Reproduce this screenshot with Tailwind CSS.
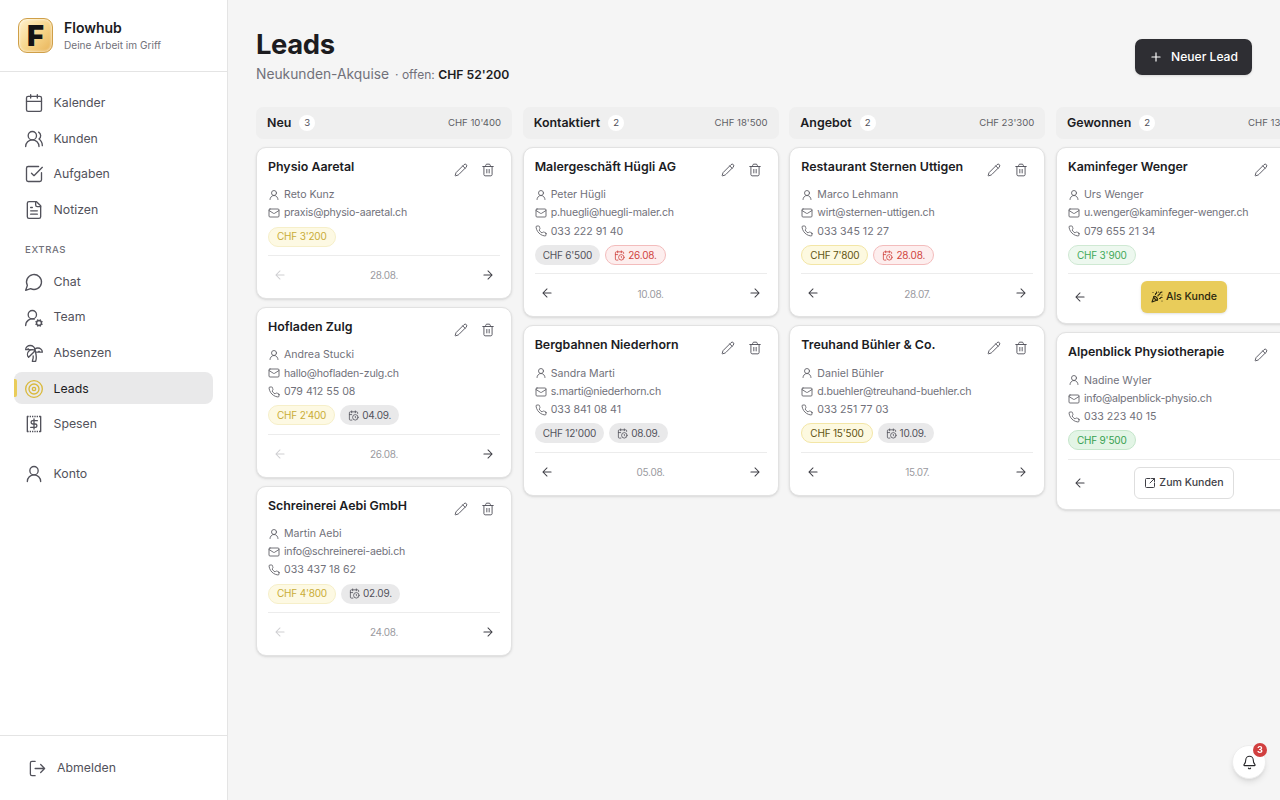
<!doctype html>
<html lang="de"><head><meta charset="utf-8"><title>Leads</title>
<script src="https://cdn.jsdelivr.net/npm/@tailwindcss/browser@4"></script></head>
<body class="m-0 h-[800px] w-[1280px] overflow-hidden bg-[#f5f5f5] font-[Inter,sans-serif] text-[#1c1c1f]">
<svg class="hidden" aria-hidden="true">
<symbol id="calendar" viewBox="0 0 24 24" fill="none" stroke="currentColor" stroke-linecap="round" stroke-linejoin="round"><path d="M8 2v4M16 2v4"/><rect x="3" y="4" width="18" height="18" rx="2"/><path d="M3 10h18"/></symbol>
<symbol id="users" viewBox="0 0 24 24" fill="none" stroke="currentColor" stroke-linecap="round" stroke-linejoin="round"><path d="M18 21a8 8 0 0 0-16 0"/><circle cx="10" cy="8" r="5"/><path d="M22 20c0-3.37-2-6.5-4-8a5 5 0 0 0-.45-8.3"/></symbol>
<symbol id="check" viewBox="0 0 24 24" fill="none" stroke="currentColor" stroke-linecap="round" stroke-linejoin="round"><path d="M21 10.5V19a2 2 0 0 1-2 2H5a2 2 0 0 1-2-2V5a2 2 0 0 1 2-2h12.5"/><path d="m9 11 3 3L22 4"/></symbol>
<symbol id="file" viewBox="0 0 24 24" fill="none" stroke="currentColor" stroke-linecap="round" stroke-linejoin="round"><path d="M15 2H6a2 2 0 0 0-2 2v16a2 2 0 0 0 2 2h12a2 2 0 0 0 2-2V7Z"/><path d="M14 2v4a2 2 0 0 0 2 2h4M10 9H8M16 13H8M16 17H8"/></symbol>
<symbol id="chat" viewBox="0 0 24 24" fill="none" stroke="currentColor" stroke-linecap="round" stroke-linejoin="round"><path d="M7.9 20A9 9 0 1 0 4 16.1L2 22Z"/></symbol>
<symbol id="usercog" viewBox="0 0 24 24" fill="none" stroke="currentColor" stroke-linecap="round" stroke-linejoin="round"><path d="M2 21a8 8 0 0 1 10.434-7.62"/><circle cx="10" cy="8" r="5"/><circle cx="18" cy="18" r="3"/><path d="m14.305 19.53.923-.382M15.228 16.852l-.923-.383M16.852 15.228l-.383-.923M16.852 20.772l-.383.924M19.148 15.228l.383-.923M19.53 21.696l-.382-.924M20.772 16.852l.924-.383M20.772 19.148l.924.383"/></symbol>
<symbol id="palm" viewBox="0 0 24 24" fill="none" stroke="currentColor" stroke-linecap="round" stroke-linejoin="round"><path d="M13 8c0-2.76-2.46-5-5.5-5S2 5.24 2 8h2l1-1 1 1h4"/><path d="M13 7.14A5.82 5.82 0 0 1 16.5 6c3.04 0 5.5 2.24 5.5 5h-3l-1-1-1 1h-3"/><path d="M5.89 9.71c-2.15 2.15-2.3 5.47-.35 7.43l4.24-4.25.7-.7.71-.71 2.12-2.12c-1.95-1.96-5.27-1.8-7.42.35"/><path d="M11 15.5c.5 2.5-.17 4.5-1 6.5h4c2-5.5-.5-12-1-14"/></symbol>
<symbol id="target" viewBox="0 0 24 24" fill="none" stroke="currentColor" stroke-linecap="round" stroke-linejoin="round"><circle cx="12" cy="12" r="10"/><circle cx="12" cy="12" r="6"/><circle cx="12" cy="12" r="2"/></symbol>
<symbol id="spesen" viewBox="0 0 24 24" fill="none" stroke="currentColor" stroke-linecap="round" stroke-linejoin="round"><path d="M4 3v18M20 3v18"/><path d="M4 3h16M4 21h16" stroke-dasharray="1.6 1.2" stroke-linecap="butt"/><path d="M16 8H10.5a2 2 0 0 0 0 4h3a2 2 0 0 1 0 4H8M12 6v12"/></symbol>
<symbol id="user" viewBox="0 0 24 24" fill="none" stroke="currentColor" stroke-linecap="round" stroke-linejoin="round"><circle cx="12" cy="8" r="5"/><path d="M20 21a8 8 0 0 0-16 0"/></symbol>
<symbol id="logout" viewBox="0 0 24 24" fill="none" stroke="currentColor" stroke-linecap="round" stroke-linejoin="round"><path d="M9 21H5a2 2 0 0 1-2-2V5a2 2 0 0 1 2-2h4"/><path d="m16 17 5-5-5-5M21 12H9"/></symbol>
<symbol id="pencil" viewBox="0 0 24 24" fill="none" stroke="currentColor" stroke-linecap="round" stroke-linejoin="round"><path d="M21.174 6.812a1 1 0 0 0-3.986-3.987L3.842 16.174a2 2 0 0 0-.5.83l-1.321 4.352a.5.5 0 0 0 .623.622l4.353-1.32a2 2 0 0 0 .83-.497z"/><path d="m15 5 4 4"/></symbol>
<symbol id="trash" viewBox="0 0 24 24" fill="none" stroke="currentColor" stroke-linecap="round" stroke-linejoin="round"><path d="M3 6h18M19 6v14c0 1-1 2-2 2H7c-1 0-2-1-2-2V6M8 6V4c0-1 1-2 2-2h4c1 0 2 1 2 2v2M10 11v6M14 11v6"/></symbol>
<symbol id="mail" viewBox="0 0 24 24" fill="none" stroke="currentColor" stroke-linecap="round" stroke-linejoin="round"><rect x="2" y="4" width="20" height="16" rx="2"/><path d="m22 7-8.97 5.7a1.94 1.94 0 0 1-2.06 0L2 7"/></symbol>
<symbol id="phone" viewBox="0 0 24 24" fill="none" stroke="currentColor" stroke-linecap="round" stroke-linejoin="round"><path d="M22 16.92v3a2 2 0 0 1-2.18 2 19.79 19.79 0 0 1-8.63-3.07 19.5 19.5 0 0 1-6-6 19.79 19.79 0 0 1-3.07-8.67A2 2 0 0 1 4.11 2h3a2 2 0 0 1 2 1.72 12.84 12.84 0 0 0 .7 2.81 2 2 0 0 1-.45 2.11L8.09 9.91a16 16 0 0 0 6 6l1.27-1.27a2 2 0 0 1 2.11-.45 12.84 12.84 0 0 0 2.81.7A2 2 0 0 1 22 16.92z"/></symbol>
<symbol id="left" viewBox="0 0 24 24" fill="none" stroke="currentColor" stroke-linecap="round" stroke-linejoin="round"><path d="M19 12H5M12 19l-7-7 7-7"/></symbol>
<symbol id="right" viewBox="0 0 24 24" fill="none" stroke="currentColor" stroke-linecap="round" stroke-linejoin="round"><path d="M5 12h14M12 5l7 7-7 7"/></symbol>
<symbol id="calclock" viewBox="0 0 24 24" fill="none" stroke="currentColor" stroke-linecap="round" stroke-linejoin="round"><path d="M21 7.5V6a2 2 0 0 0-2-2H5a2 2 0 0 0-2 2v14a2 2 0 0 0 2 2h3.5M16 2v4M8 2v4M3 10h5M17.5 17.5 16 16.3V14"/><circle cx="16" cy="16" r="6"/></symbol>
<symbol id="party" viewBox="0 0 24 24" fill="none" stroke="currentColor" stroke-linecap="round" stroke-linejoin="round"><path d="M5.8 11.3 2 22l10.7-3.79M4 3h.01M22 8h.01M15 2h.01M22 20h.01M22 2l-2.24.75a2.9 2.9 0 0 0-1.96 3.12c.1.86-.57 1.63-1.45 1.63h-.38c-.86 0-1.6.6-1.76 1.44L14 10M22 13l-.82-.33c-.86-.34-1.82.2-1.98 1.11-.11.7-.72 1.22-1.43 1.22H17M11 2l.33.82c.34.86-.2 1.82-1.11 1.98C9.52 4.9 9 5.52 9 6.23V7"/><path d="M11 13c1.93 1.93 2.83 4.17 2 5-.83.83-3.07-.07-5-2-1.93-1.93-2.83-4.17-2-5 .83-.83 3.07.07 5 2Z"/></symbol>
<symbol id="external" viewBox="0 0 24 24" fill="none" stroke="currentColor" stroke-linecap="round" stroke-linejoin="round"><path d="M12 3H5a2 2 0 0 0-2 2v14a2 2 0 0 0 2 2h14a2 2 0 0 0 2-2v-7M21 3l-9 9M15 3h6v6"/></symbol>
<symbol id="bell" viewBox="0 0 24 24" fill="none" stroke="currentColor" stroke-linecap="round" stroke-linejoin="round"><path d="M10.268 21a2 2 0 0 0 3.464 0"/><path d="M3.262 15.326A1 1 0 0 0 4 17h16a1 1 0 0 0 .74-1.673C19.41 13.956 18 12.499 18 8A6 6 0 0 0 6 8c0 4.499-1.411 5.956-2.738 7.326"/></symbol>
<symbol id="plus" viewBox="0 0 24 24" fill="none" stroke="currentColor" stroke-linecap="round" stroke-linejoin="round"><path d="M5 12h14M12 5v14"/></symbol>
</svg>

<div class="flex h-[800px] w-[1280px]">
<aside class="flex h-full w-[228px] shrink-0 flex-col border-r border-[#e4e4e4] bg-white">
  <div class="flex h-[72px] shrink-0 items-center gap-[11px] border-b border-[#e4e4e4] pl-[18px]">
    <div class="flex size-[35px] items-center justify-center rounded-[9px] border-[1.5px] border-[#cf9f48] bg-[linear-gradient(135deg,#fff1cb_0%,#f6d488_55%,#e8b257_100%)] text-[29px] leading-none font-black text-[#141414] shadow-[inset_0_0_3px_#fff]">F</div>
    <div class="flex flex-col gap-[2px]">
      <span class="text-[14px] leading-[18px] font-semibold text-[#1c1c1f]">Flowhub</span>
      <span class="text-[10.1px] leading-[13px] text-[#71717a]">Deine Arbeit im Griff</span>
    </div>
  </div>
  <nav class="flex flex-col px-[14px] pt-[14.8px] text-[12.3px] text-[#52525b]">
    <div class="flex flex-col gap-[3.55px]">
      <a class="flex h-[32px] items-center gap-[10px] pt-[1px] pl-[9.5px]"><svg class="size-[20px] stroke-[1.6]"><use href="#calendar"/></svg>Kalender</a>
      <a class="flex h-[32px] items-center gap-[10px] pt-[1px] pl-[9.5px]"><svg class="size-[20px] stroke-[1.6]"><use href="#users"/></svg>Kunden</a>
      <a class="flex h-[32px] items-center gap-[10px] pt-[1px] pl-[9.5px]"><svg class="size-[20px] stroke-[1.6]"><use href="#check"/></svg>Aufgaben</a>
      <a class="flex h-[32px] items-center gap-[10px] pt-[1px] pl-[9.5px]"><svg class="size-[20px] stroke-[1.6]"><use href="#file"/></svg>Notizen</a>
    </div>
    <div class="mt-[18px] mb-[8.2px] h-[14px] pl-[11px] text-[9.6px] leading-[14px] font-medium tracking-[0.6px] text-[#71717a]">EXTRAS</div>
    <div class="flex flex-col gap-[3.55px]">
      <a class="flex h-[32px] items-center gap-[10px] pt-[1px] pl-[9.5px]"><svg class="size-[20px] stroke-[1.6]"><use href="#chat"/></svg>Chat</a>
      <a class="flex h-[32px] items-center gap-[10px] pt-[1px] pl-[9.5px]"><svg class="size-[20px] stroke-[1.6]"><use href="#usercog"/></svg>Team</a>
      <a class="flex h-[32px] items-center gap-[10px] pt-[1px] pl-[9.5px]"><svg class="size-[20px] stroke-[1.6]"><use href="#palm"/></svg>Absenzen</a>
      <a class="relative flex h-[32px] items-center gap-[10px] rounded-[8px] bg-[#e9e9ea] pt-[1px] pl-[9.5px] text-[#1c1c1f]"><span class="absolute top-[7px] left-0 h-[18px] w-[3px] rounded-r-[2px] bg-[#e9cc5a]"></span><svg class="size-[20px] stroke-[1.6] text-[#d9b93c]"><use href="#target"/></svg>Leads</a>
      <a class="flex h-[32px] items-center gap-[10px] pt-[1px] pl-[9.5px]"><svg class="size-[20px] stroke-[1.6]"><use href="#spesen"/></svg>Spesen</a>
    </div>
    <a class="mt-[18px] flex h-[32px] items-center gap-[10px] pt-[1px] pl-[9.5px]"><svg class="size-[20px] stroke-[1.6]"><use href="#user"/></svg>Konto</a>
  </nav>
  <div class="mt-auto flex h-[65px] items-center gap-[10px] border-t border-[#e4e4e4] pt-[1px] pl-[28px] text-[12.3px] text-[#52525b]"><svg class="size-[19px] stroke-[1.6]"><use href="#logout"/></svg>Abmelden</div>
</aside>

<main class="min-w-0 flex-1 overflow-hidden pt-[26px] pl-[28px]">
  <header class="flex h-[81px] items-start justify-between pr-[28px]">
    <div>
      <h1 class="text-[27.4px] leading-[36px] font-bold tracking-[-0.4px] text-[#1c1c1f]">Leads</h1>
      <p class="mt-[2px] flex items-baseline text-[13.8px] leading-[20px] text-[#71717a]">Neukunden-Akquise<span class="ml-[6px] text-[12px]">· offen:</span><span class="ml-[3.5px] text-[12.2px] font-semibold text-[#1c1c1f]">CHF 52'200</span></p>
    </div>
    <button class="mt-[13px] flex h-[36px] w-[117px] items-center justify-center gap-[8px] rounded-[7px] bg-[#2e2e33] text-[12.1px] font-medium text-white shadow-sm"><svg class="size-[14px] stroke-2"><use href="#plus"/></svg>Neuer Lead</button>
  </header>

  <div class="flex gap-[10.67px]">

    <section class="flex w-[256px] shrink-0 flex-col gap-[8px]">
      <div class="flex h-[32px] items-center justify-between rounded-[7px] bg-[#efefef] px-[11px]"><div class="flex items-center gap-[8px]"><span class="text-[12.4px] font-semibold">Neu</span><span class="flex size-[16px] items-center justify-center rounded-full bg-white text-[9.6px] text-[#52525b]">3</span></div><span class="text-[9.6px] text-[#5f5f66]">CHF 10'400</span></div>

      <article class="flex flex-col rounded-[10px] border border-[#e2e2e2] bg-white px-[11px] pt-[11px] pb-[11px] shadow-sm">
        <div class="flex h-[27px] items-start justify-between"><h3 class="text-[12.4px] leading-[15px] font-semibold">Physio Aaretal</h3><div class="flex gap-[3px] text-[#52525b]"><span class="flex h-[22px] w-[24px] items-center justify-center"><svg class="size-[14px] stroke-[1.6]"><use href="#pencil"/></svg></span><span class="flex h-[22px] w-[24px] items-center justify-center"><svg class="size-[14px] stroke-[1.6]"><use href="#trash"/></svg></span></div></div>
        <div class="flex h-[18.2px] items-center gap-[4px] text-[10.6px] text-[#71717a]"><svg class="size-[12px] stroke-[1.75] text-[#5f5f66]"><use href="#user"/></svg>Reto Kunz</div>
        <div class="flex h-[18.2px] items-center gap-[4px] text-[10.6px] tracking-[-0.2px] text-[#71717a]"><svg class="size-[12px] stroke-[1.75] text-[#5f5f66]"><use href="#mail"/></svg>praxis@physio-aaretal.ch</div>
        <div class="mt-[4.5px] flex gap-[5px]"><span class="flex h-[20px] items-center rounded-full border border-[#f6efc9] bg-[#fdf9e3] px-[8px] text-[10px] tracking-[-0.2px] text-[#c9ac36]">CHF 3'200</span></div>
        <div class="mt-[8.3px] flex items-center justify-between border-t border-[#ececec] pt-[7px]"><span class="flex h-[24px] w-[24px] items-center justify-center text-[#cfcfd2]"><svg class="size-[14px] stroke-[1.75]"><use href="#left"/></svg></span><span class="pt-[1.5px] text-[10px] tracking-[-0.3px] text-[#9a9aa0]">28.08.</span><span class="flex h-[24px] w-[24px] items-center justify-center text-[#3f3f46]"><svg class="size-[14px] stroke-[1.75]"><use href="#right"/></svg></span></div>
      </article>

      <article class="flex flex-col rounded-[10px] border border-[#e2e2e2] bg-white px-[11px] pt-[11px] pb-[11px] shadow-sm">
        <div class="flex h-[27px] items-start justify-between"><h3 class="text-[12.4px] leading-[15px] font-semibold">Hofladen Zulg</h3><div class="flex gap-[3px] text-[#52525b]"><span class="flex h-[22px] w-[24px] items-center justify-center"><svg class="size-[14px] stroke-[1.6]"><use href="#pencil"/></svg></span><span class="flex h-[22px] w-[24px] items-center justify-center"><svg class="size-[14px] stroke-[1.6]"><use href="#trash"/></svg></span></div></div>
        <div class="flex h-[18.2px] items-center gap-[4px] text-[10.6px] text-[#71717a]"><svg class="size-[12px] stroke-[1.75] text-[#5f5f66]"><use href="#user"/></svg>Andrea Stucki</div>
        <div class="flex h-[18.2px] items-center gap-[4px] text-[10.6px] tracking-[-0.2px] text-[#71717a]"><svg class="size-[12px] stroke-[1.75] text-[#5f5f66]"><use href="#mail"/></svg>hallo@hofladen-zulg.ch</div>
        <div class="flex h-[18.2px] items-center gap-[4px] text-[10.6px] text-[#71717a]"><svg class="size-[12px] stroke-[1.75] text-[#5f5f66]"><use href="#phone"/></svg>079 412 55 08</div>
        <div class="mt-[4.5px] flex gap-[5px]"><span class="flex h-[20px] items-center rounded-full border border-[#f6efc9] bg-[#fdf9e3] px-[8px] text-[10px] tracking-[-0.2px] text-[#c9ac36]">CHF 2'400</span><span class="flex h-[20px] items-center gap-[3px] rounded-full bg-[#e9e9ea] px-[8px] text-[10px] tracking-[-0.2px] text-[#52525b]"><svg class="size-[11px] stroke-[1.75]"><use href="#calclock"/></svg>04.09.</span></div>
        <div class="mt-[8.3px] flex items-center justify-between border-t border-[#ececec] pt-[7px]"><span class="flex h-[24px] w-[24px] items-center justify-center text-[#cfcfd2]"><svg class="size-[14px] stroke-[1.75]"><use href="#left"/></svg></span><span class="pt-[1.5px] text-[10px] tracking-[-0.3px] text-[#9a9aa0]">26.08.</span><span class="flex h-[24px] w-[24px] items-center justify-center text-[#3f3f46]"><svg class="size-[14px] stroke-[1.75]"><use href="#right"/></svg></span></div>
      </article>

      <article class="flex flex-col rounded-[10px] border border-[#e2e2e2] bg-white px-[11px] pt-[11px] pb-[11px] shadow-sm">
        <div class="flex h-[27px] items-start justify-between"><h3 class="text-[12.4px] leading-[15px] font-semibold">Schreinerei Aebi GmbH</h3><div class="flex gap-[3px] text-[#52525b]"><span class="flex h-[22px] w-[24px] items-center justify-center"><svg class="size-[14px] stroke-[1.6]"><use href="#pencil"/></svg></span><span class="flex h-[22px] w-[24px] items-center justify-center"><svg class="size-[14px] stroke-[1.6]"><use href="#trash"/></svg></span></div></div>
        <div class="flex h-[18.2px] items-center gap-[4px] text-[10.6px] text-[#71717a]"><svg class="size-[12px] stroke-[1.75] text-[#5f5f66]"><use href="#user"/></svg>Martin Aebi</div>
        <div class="flex h-[18.2px] items-center gap-[4px] text-[10.6px] tracking-[-0.2px] text-[#71717a]"><svg class="size-[12px] stroke-[1.75] text-[#5f5f66]"><use href="#mail"/></svg>info@schreinerei-aebi.ch</div>
        <div class="flex h-[18.2px] items-center gap-[4px] text-[10.6px] text-[#71717a]"><svg class="size-[12px] stroke-[1.75] text-[#5f5f66]"><use href="#phone"/></svg>033 437 18 62</div>
        <div class="mt-[4.5px] flex gap-[5px]"><span class="flex h-[20px] items-center rounded-full border border-[#f6efc9] bg-[#fdf9e3] px-[8px] text-[10px] tracking-[-0.2px] text-[#c9ac36]">CHF 4'800</span><span class="flex h-[20px] items-center gap-[3px] rounded-full bg-[#e9e9ea] px-[8px] text-[10px] tracking-[-0.2px] text-[#52525b]"><svg class="size-[11px] stroke-[1.75]"><use href="#calclock"/></svg>02.09.</span></div>
        <div class="mt-[8.3px] flex items-center justify-between border-t border-[#ececec] pt-[7px]"><span class="flex h-[24px] w-[24px] items-center justify-center text-[#cfcfd2]"><svg class="size-[14px] stroke-[1.75]"><use href="#left"/></svg></span><span class="pt-[1.5px] text-[10px] tracking-[-0.3px] text-[#9a9aa0]">24.08.</span><span class="flex h-[24px] w-[24px] items-center justify-center text-[#3f3f46]"><svg class="size-[14px] stroke-[1.75]"><use href="#right"/></svg></span></div>
      </article>
    </section>

    <section class="flex w-[256px] shrink-0 flex-col gap-[8px]">
      <div class="flex h-[32px] items-center justify-between rounded-[7px] bg-[#efefef] px-[11px]"><div class="flex items-center gap-[8px]"><span class="text-[12.4px] font-semibold">Kontaktiert</span><span class="flex size-[16px] items-center justify-center rounded-full bg-white text-[9.6px] text-[#52525b]">2</span></div><span class="text-[9.6px] text-[#5f5f66]">CHF 18'500</span></div>

      <article class="flex flex-col rounded-[10px] border border-[#e2e2e2] bg-white px-[11px] pt-[11px] pb-[11px] shadow-sm">
        <div class="flex h-[27px] items-start justify-between"><h3 class="text-[12.4px] leading-[15px] font-semibold">Malergeschäft Hügli AG</h3><div class="flex gap-[3px] text-[#52525b]"><span class="flex h-[22px] w-[24px] items-center justify-center"><svg class="size-[14px] stroke-[1.6]"><use href="#pencil"/></svg></span><span class="flex h-[22px] w-[24px] items-center justify-center"><svg class="size-[14px] stroke-[1.6]"><use href="#trash"/></svg></span></div></div>
        <div class="flex h-[18.2px] items-center gap-[4px] text-[10.6px] text-[#71717a]"><svg class="size-[12px] stroke-[1.75] text-[#5f5f66]"><use href="#user"/></svg>Peter Hügli</div>
        <div class="flex h-[18.2px] items-center gap-[4px] text-[10.6px] tracking-[-0.2px] text-[#71717a]"><svg class="size-[12px] stroke-[1.75] text-[#5f5f66]"><use href="#mail"/></svg>p.huegli@huegli-maler.ch</div>
        <div class="flex h-[18.2px] items-center gap-[4px] text-[10.6px] text-[#71717a]"><svg class="size-[12px] stroke-[1.75] text-[#5f5f66]"><use href="#phone"/></svg>033 222 91 40</div>
        <div class="mt-[4.5px] flex gap-[5px]"><span class="flex h-[20px] items-center rounded-full bg-[#e9e9ea] px-[8px] text-[10px] tracking-[-0.2px] text-[#52525b]">CHF 6'500</span><span class="flex h-[20px] items-center gap-[3px] rounded-full border border-[#f3bcbc] bg-[#fdeeee] px-[8px] text-[10px] tracking-[-0.2px] text-[#d0443f]"><svg class="size-[11px] stroke-[1.75]"><use href="#calclock"/></svg>26.08.</span></div>
        <div class="mt-[8.3px] flex items-center justify-between border-t border-[#ececec] pt-[7px]"><span class="flex h-[24px] w-[24px] items-center justify-center text-[#3f3f46]"><svg class="size-[14px] stroke-[1.75]"><use href="#left"/></svg></span><span class="pt-[1.5px] text-[10px] tracking-[-0.3px] text-[#9a9aa0]">10.08.</span><span class="flex h-[24px] w-[24px] items-center justify-center text-[#3f3f46]"><svg class="size-[14px] stroke-[1.75]"><use href="#right"/></svg></span></div>
      </article>

      <article class="flex flex-col rounded-[10px] border border-[#e2e2e2] bg-white px-[11px] pt-[11px] pb-[11px] shadow-sm">
        <div class="flex h-[27px] items-start justify-between"><h3 class="text-[12.4px] leading-[15px] font-semibold">Bergbahnen Niederhorn</h3><div class="flex gap-[3px] text-[#52525b]"><span class="flex h-[22px] w-[24px] items-center justify-center"><svg class="size-[14px] stroke-[1.6]"><use href="#pencil"/></svg></span><span class="flex h-[22px] w-[24px] items-center justify-center"><svg class="size-[14px] stroke-[1.6]"><use href="#trash"/></svg></span></div></div>
        <div class="flex h-[18.2px] items-center gap-[4px] text-[10.6px] text-[#71717a]"><svg class="size-[12px] stroke-[1.75] text-[#5f5f66]"><use href="#user"/></svg>Sandra Marti</div>
        <div class="flex h-[18.2px] items-center gap-[4px] text-[10.6px] tracking-[-0.2px] text-[#71717a]"><svg class="size-[12px] stroke-[1.75] text-[#5f5f66]"><use href="#mail"/></svg>s.marti@niederhorn.ch</div>
        <div class="flex h-[18.2px] items-center gap-[4px] text-[10.6px] text-[#71717a]"><svg class="size-[12px] stroke-[1.75] text-[#5f5f66]"><use href="#phone"/></svg>033 841 08 41</div>
        <div class="mt-[4.5px] flex gap-[5px]"><span class="flex h-[20px] items-center rounded-full bg-[#e9e9ea] px-[8px] text-[10px] tracking-[-0.2px] text-[#52525b]">CHF 12'000</span><span class="flex h-[20px] items-center gap-[3px] rounded-full bg-[#e9e9ea] px-[8px] text-[10px] tracking-[-0.2px] text-[#52525b]"><svg class="size-[11px] stroke-[1.75]"><use href="#calclock"/></svg>08.09.</span></div>
        <div class="mt-[8.3px] flex items-center justify-between border-t border-[#ececec] pt-[7px]"><span class="flex h-[24px] w-[24px] items-center justify-center text-[#3f3f46]"><svg class="size-[14px] stroke-[1.75]"><use href="#left"/></svg></span><span class="pt-[1.5px] text-[10px] tracking-[-0.3px] text-[#9a9aa0]">05.08.</span><span class="flex h-[24px] w-[24px] items-center justify-center text-[#3f3f46]"><svg class="size-[14px] stroke-[1.75]"><use href="#right"/></svg></span></div>
      </article>
    </section>

    <section class="flex w-[256px] shrink-0 flex-col gap-[8px]">
      <div class="flex h-[32px] items-center justify-between rounded-[7px] bg-[#efefef] px-[11px]"><div class="flex items-center gap-[8px]"><span class="text-[12.4px] font-semibold">Angebot</span><span class="flex size-[16px] items-center justify-center rounded-full bg-white text-[9.6px] text-[#52525b]">2</span></div><span class="text-[9.6px] text-[#5f5f66]">CHF 23'300</span></div>

      <article class="flex flex-col rounded-[10px] border border-[#e2e2e2] bg-white px-[11px] pt-[11px] pb-[11px] shadow-sm">
        <div class="flex h-[27px] items-start justify-between"><h3 class="text-[12.4px] leading-[15px] font-semibold">Restaurant Sternen Uttigen</h3><div class="flex gap-[3px] text-[#52525b]"><span class="flex h-[22px] w-[24px] items-center justify-center"><svg class="size-[14px] stroke-[1.6]"><use href="#pencil"/></svg></span><span class="flex h-[22px] w-[24px] items-center justify-center"><svg class="size-[14px] stroke-[1.6]"><use href="#trash"/></svg></span></div></div>
        <div class="flex h-[18.2px] items-center gap-[4px] text-[10.6px] text-[#71717a]"><svg class="size-[12px] stroke-[1.75] text-[#5f5f66]"><use href="#user"/></svg>Marco Lehmann</div>
        <div class="flex h-[18.2px] items-center gap-[4px] text-[10.6px] tracking-[-0.2px] text-[#71717a]"><svg class="size-[12px] stroke-[1.75] text-[#5f5f66]"><use href="#mail"/></svg>wirt@sternen-uttigen.ch</div>
        <div class="flex h-[18.2px] items-center gap-[4px] text-[10.6px] text-[#71717a]"><svg class="size-[12px] stroke-[1.75] text-[#5f5f66]"><use href="#phone"/></svg>033 345 12 27</div>
        <div class="mt-[4.5px] flex gap-[5px]"><span class="flex h-[20px] items-center rounded-full border border-[#f3e6a6] bg-[#fdf9e0] px-[8px] text-[10px] tracking-[-0.2px] text-[#5f5312]">CHF 7'800</span><span class="flex h-[20px] items-center gap-[3px] rounded-full border border-[#f3bcbc] bg-[#fdeeee] px-[8px] text-[10px] tracking-[-0.2px] text-[#d0443f]"><svg class="size-[11px] stroke-[1.75]"><use href="#calclock"/></svg>28.08.</span></div>
        <div class="mt-[8.3px] flex items-center justify-between border-t border-[#ececec] pt-[7px]"><span class="flex h-[24px] w-[24px] items-center justify-center text-[#3f3f46]"><svg class="size-[14px] stroke-[1.75]"><use href="#left"/></svg></span><span class="pt-[1.5px] text-[10px] tracking-[-0.3px] text-[#9a9aa0]">28.07.</span><span class="flex h-[24px] w-[24px] items-center justify-center text-[#3f3f46]"><svg class="size-[14px] stroke-[1.75]"><use href="#right"/></svg></span></div>
      </article>

      <article class="flex flex-col rounded-[10px] border border-[#e2e2e2] bg-white px-[11px] pt-[11px] pb-[11px] shadow-sm">
        <div class="flex h-[27px] items-start justify-between"><h3 class="text-[12.4px] leading-[15px] font-semibold">Treuhand Bühler &amp; Co.</h3><div class="flex gap-[3px] text-[#52525b]"><span class="flex h-[22px] w-[24px] items-center justify-center"><svg class="size-[14px] stroke-[1.6]"><use href="#pencil"/></svg></span><span class="flex h-[22px] w-[24px] items-center justify-center"><svg class="size-[14px] stroke-[1.6]"><use href="#trash"/></svg></span></div></div>
        <div class="flex h-[18.2px] items-center gap-[4px] text-[10.6px] text-[#71717a]"><svg class="size-[12px] stroke-[1.75] text-[#5f5f66]"><use href="#user"/></svg>Daniel Bühler</div>
        <div class="flex h-[18.2px] items-center gap-[4px] text-[10.6px] tracking-[-0.2px] text-[#71717a]"><svg class="size-[12px] stroke-[1.75] text-[#5f5f66]"><use href="#mail"/></svg>d.buehler@treuhand-buehler.ch</div>
        <div class="flex h-[18.2px] items-center gap-[4px] text-[10.6px] text-[#71717a]"><svg class="size-[12px] stroke-[1.75] text-[#5f5f66]"><use href="#phone"/></svg>033 251 77 03</div>
        <div class="mt-[4.5px] flex gap-[5px]"><span class="flex h-[20px] items-center rounded-full border border-[#f3e6a6] bg-[#fdf9e0] px-[8px] text-[10px] tracking-[-0.2px] text-[#5f5312]">CHF 15'500</span><span class="flex h-[20px] items-center gap-[3px] rounded-full bg-[#e9e9ea] px-[8px] text-[10px] tracking-[-0.2px] text-[#52525b]"><svg class="size-[11px] stroke-[1.75]"><use href="#calclock"/></svg>10.09.</span></div>
        <div class="mt-[8.3px] flex items-center justify-between border-t border-[#ececec] pt-[7px]"><span class="flex h-[24px] w-[24px] items-center justify-center text-[#3f3f46]"><svg class="size-[14px] stroke-[1.75]"><use href="#left"/></svg></span><span class="pt-[1.5px] text-[10px] tracking-[-0.3px] text-[#9a9aa0]">15.07.</span><span class="flex h-[24px] w-[24px] items-center justify-center text-[#3f3f46]"><svg class="size-[14px] stroke-[1.75]"><use href="#right"/></svg></span></div>
      </article>
    </section>

    <section class="flex w-[256px] shrink-0 flex-col gap-[8px]">
      <div class="flex h-[32px] items-center justify-between rounded-[7px] bg-[#efefef] px-[11px]"><div class="flex items-center gap-[8px]"><span class="text-[12.4px] font-semibold">Gewonnen</span><span class="flex size-[16px] items-center justify-center rounded-full bg-white text-[9.6px] text-[#52525b]">2</span></div><span class="text-[9.6px] text-[#5f5f66]">CHF 13'400</span></div>

      <article class="flex flex-col rounded-[10px] border border-[#e2e2e2] bg-white px-[11px] pt-[11px] pb-[10px] shadow-sm">
        <div class="flex h-[27px] items-start justify-between"><h3 class="text-[12.4px] leading-[15px] font-semibold">Kaminfeger Wenger</h3><div class="flex gap-[3px] text-[#52525b]"><span class="flex h-[22px] w-[24px] items-center justify-center"><svg class="size-[14px] stroke-[1.6]"><use href="#pencil"/></svg></span><span class="flex h-[22px] w-[24px] items-center justify-center"><svg class="size-[14px] stroke-[1.6]"><use href="#trash"/></svg></span></div></div>
        <div class="flex h-[18.2px] items-center gap-[4px] text-[10.6px] text-[#71717a]"><svg class="size-[12px] stroke-[1.75] text-[#5f5f66]"><use href="#user"/></svg>Urs Wenger</div>
        <div class="flex h-[18.2px] items-center gap-[4px] text-[10.6px] tracking-[-0.2px] text-[#71717a]"><svg class="size-[12px] stroke-[1.75] text-[#5f5f66]"><use href="#mail"/></svg>u.wenger@kaminfeger-wenger.ch</div>
        <div class="flex h-[18.2px] items-center gap-[4px] text-[10.6px] text-[#71717a]"><svg class="size-[12px] stroke-[1.75] text-[#5f5f66]"><use href="#phone"/></svg>079 655 21 34</div>
        <div class="mt-[4.5px] flex gap-[5px]"><span class="flex h-[20px] items-center rounded-full border border-[#cfe9d3] bg-[#edf8ef] px-[8px] text-[10px] tracking-[-0.2px] text-[#3fa859]">CHF 3'900</span></div>
        <div class="mt-[8.3px] flex items-center justify-between border-t border-[#ececec] pt-[7px]"><span class="flex h-[24px] w-[24px] items-center justify-center text-[#3f3f46]"><svg class="size-[14px] stroke-[1.75]"><use href="#left"/></svg></span><button class="flex h-[32px] w-[86px] items-center justify-center gap-[3px] rounded-[6px] bg-[#e9cc5a] text-[10.6px] font-medium text-[#2c280f] shadow-sm"><svg class="size-[12px] stroke-[2.2]"><use href="#party"/></svg>Als Kunde</button><span class="flex h-[24px] w-[24px] items-center justify-center text-[#3f3f46]"><svg class="size-[14px] stroke-[1.75]"><use href="#right"/></svg></span></div>
      </article>

      <article class="flex flex-col rounded-[10px] border border-[#e2e2e2] bg-white px-[11px] pt-[11px] pb-[10px] shadow-sm">
        <div class="flex h-[27px] items-start justify-between"><h3 class="text-[12.4px] leading-[15px] font-semibold">Alpenblick Physiotherapie</h3><div class="flex gap-[3px] text-[#52525b]"><span class="flex h-[22px] w-[24px] items-center justify-center"><svg class="size-[14px] stroke-[1.6]"><use href="#pencil"/></svg></span><span class="flex h-[22px] w-[24px] items-center justify-center"><svg class="size-[14px] stroke-[1.6]"><use href="#trash"/></svg></span></div></div>
        <div class="flex h-[18.2px] items-center gap-[4px] text-[10.6px] text-[#71717a]"><svg class="size-[12px] stroke-[1.75] text-[#5f5f66]"><use href="#user"/></svg>Nadine Wyler</div>
        <div class="flex h-[18.2px] items-center gap-[4px] text-[10.6px] tracking-[-0.2px] text-[#71717a]"><svg class="size-[12px] stroke-[1.75] text-[#5f5f66]"><use href="#mail"/></svg>info@alpenblick-physio.ch</div>
        <div class="flex h-[18.2px] items-center gap-[4px] text-[10.6px] text-[#71717a]"><svg class="size-[12px] stroke-[1.75] text-[#5f5f66]"><use href="#phone"/></svg>033 223 40 15</div>
        <div class="mt-[4.5px] flex gap-[5px]"><span class="flex h-[20px] items-center rounded-full border border-[#c5e6cb] bg-[#e3f5e6] px-[8px] text-[10px] tracking-[-0.2px] text-[#35a04f]">CHF 9'500</span></div>
        <div class="mt-[8.3px] flex items-center justify-between border-t border-[#ececec] pt-[7px]"><span class="flex h-[24px] w-[24px] items-center justify-center text-[#3f3f46]"><svg class="size-[14px] stroke-[1.75]"><use href="#left"/></svg></span><button class="flex h-[32px] w-[100px] items-center justify-center gap-[3px] rounded-[6px] border border-[#dedede] bg-white text-[10.6px] font-medium text-[#3f3f46]"><svg class="size-[12px] stroke-2"><use href="#external"/></svg>Zum Kunden</button><span class="flex h-[24px] w-[24px] items-center justify-center text-[#3f3f46]"><svg class="size-[14px] stroke-[1.75]"><use href="#right"/></svg></span></div>
      </article>
    </section>
  </div>
</main>
</div>

<div class="fixed top-[745px] left-[1232px] flex size-[34px] items-center justify-center rounded-full border border-[#ececec] bg-white text-[#27272a] shadow-md"><svg class="size-[15px] stroke-[1.75]"><use href="#bell"/></svg><span class="absolute -top-[3px] -right-[2px] flex size-[14px] items-center justify-center rounded-full bg-[#d13f3f] text-[9px] font-bold text-white">3</span></div>
</body></html>
